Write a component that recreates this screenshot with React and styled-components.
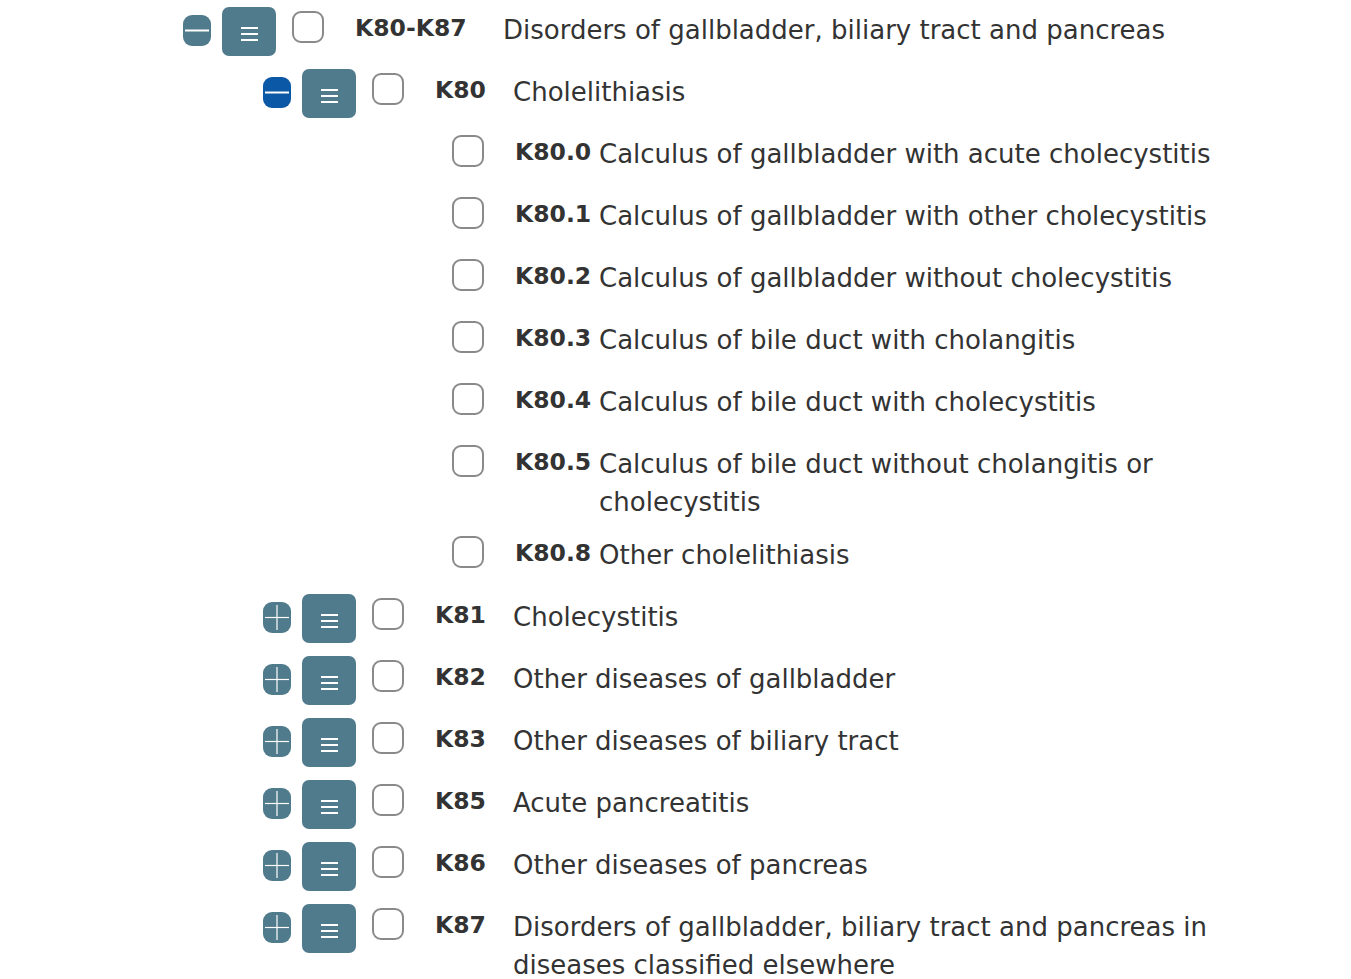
import React from "react";
import styled, { createGlobalStyle } from "styled-components";

const GlobalStyle = createGlobalStyle`
    html, body {
        margin: 0;
        padding: 0;
        background: #ffffff;
    }
    body {
        font-family: "DejaVu Sans", Verdana, sans-serif;
        color: #333333;
    }
`;

const tree = [
    { code: "K80-K87", title: "Disorders of gallbladder, biliary tract and pancreas", level: 0, open: true },
    { code: "K80", title: "Cholelithiasis", level: 1, open: true, active: true },
    { code: "K80.0", title: "Calculus of gallbladder with acute cholecystitis", level: 2 },
    { code: "K80.1", title: "Calculus of gallbladder with other cholecystitis", level: 2 },
    { code: "K80.2", title: "Calculus of gallbladder without cholecystitis", level: 2 },
    { code: "K80.3", title: "Calculus of bile duct with cholangitis", level: 2 },
    { code: "K80.4", title: "Calculus of bile duct with cholecystitis", level: 2 },
    { code: "K80.5", title: "Calculus of bile duct without cholangitis or cholecystitis", level: 2 },
    { code: "K80.8", title: "Other cholelithiasis", level: 2 },
    { code: "K81", title: "Cholecystitis", level: 1 },
    { code: "K82", title: "Other diseases of gallbladder", level: 1 },
    { code: "K83", title: "Other diseases of biliary tract", level: 1 },
    { code: "K85", title: "Acute pancreatitis", level: 1 },
    { code: "K86", title: "Other diseases of pancreas", level: 1 },
    { code: "K87", title: "Disorders of gallbladder, biliary tract and pancreas in diseases classified elsewhere", level: 1 },
];

const codeWidths = [148, 78, 84];

const Tree = styled.div`
    width: 1232px;
    padding-left: 183px;
    box-sizing: border-box;
`;

const Row = styled.div`
    display: flex;
    align-items: flex-start;
    min-height: 62px;
    padding-bottom: 4px;
    padding-left: ${(p) => p.$indent}px;
    box-sizing: border-box;
`;

const Toggle = styled.div`
    flex: none;
    width: 28px;
    height: 31px;
    margin-top: 15px;
    margin-right: 11px;
    border-radius: 9px;
    background: ${(p) => (p.$active ? "#0b58a6" : "#507b8c")};
    display: flex;
    align-items: center;
    justify-content: center;
`;

const MenuButton = styled.div`
    flex: none;
    width: 54px;
    height: 49px;
    margin-top: 7px;
    margin-right: 16px;
    border-radius: 7px;
    background: #507b8c;
    display: flex;
    align-items: center;
    justify-content: center;
    padding-top: 4px;
    box-sizing: border-box;
`;

const Check = styled.div`
    flex: none;
    width: 32px;
    height: 32px;
    margin-top: 11px;
    margin-right: 31px;
    border: 2.5px solid #8a8a8a;
    border-radius: 9px;
    background: #fff;
    box-sizing: border-box;
`;

const Code = styled.div`
    flex: none;
    width: ${(p) => p.$width}px;
    margin-top: 9px;
    font-size: 23.5px;
    line-height: 38px;
    font-weight: bold;
    color: #333;
    white-space: nowrap;
`;

const Title = styled.div`
    flex: 1;
    margin-top: 11px;
    font-size: 26px;
    line-height: 38px;
    color: #333;
`;

function ToggleIcon({ open }) {
    return (
        <svg width="28" height="31" viewBox="0 0 28 31">
            <line x1="2" y1="15.5" x2="26" y2="15.5" stroke="#fff" strokeWidth={open ? 2 : 1.2} />
            {!open && <line x1="14" y1="3" x2="14" y2="28" stroke="#fff" strokeWidth="1.2" />}
        </svg>
    );
}

function MenuIcon() {
    return (
        <svg width="17" height="14" viewBox="0 0 17 14">
            <rect x="0" y="0" width="17" height="2" fill="#fff" />
            <rect x="0" y="6" width="17" height="2" fill="#fff" />
            <rect x="0" y="12" width="17" height="2" fill="#fff" />
        </svg>
    );
}

function TreeRow({ item }) {
    const hasControls = item.level < 2;
    const indent = item.level * 80 + (hasControls ? 0 : 109);
    return (
        <Row $indent={indent}>
            {hasControls && (
                <>
                    <Toggle $active={item.active}>
                        <ToggleIcon open={item.open} />
                    </Toggle>
                    <MenuButton>
                        <MenuIcon />
                    </MenuButton>
                </>
            )}
            <Check />
            <Code $width={codeWidths[item.level]}>{item.code}</Code>
            <Title>{item.title}</Title>
        </Row>
    );
}

export default function App() {
    return (
        <>
            <GlobalStyle />
            <Tree>
                {tree.map((item) => (
                    <TreeRow key={item.code} item={item} />
                ))}
            </Tree>
        </>
    );
}
